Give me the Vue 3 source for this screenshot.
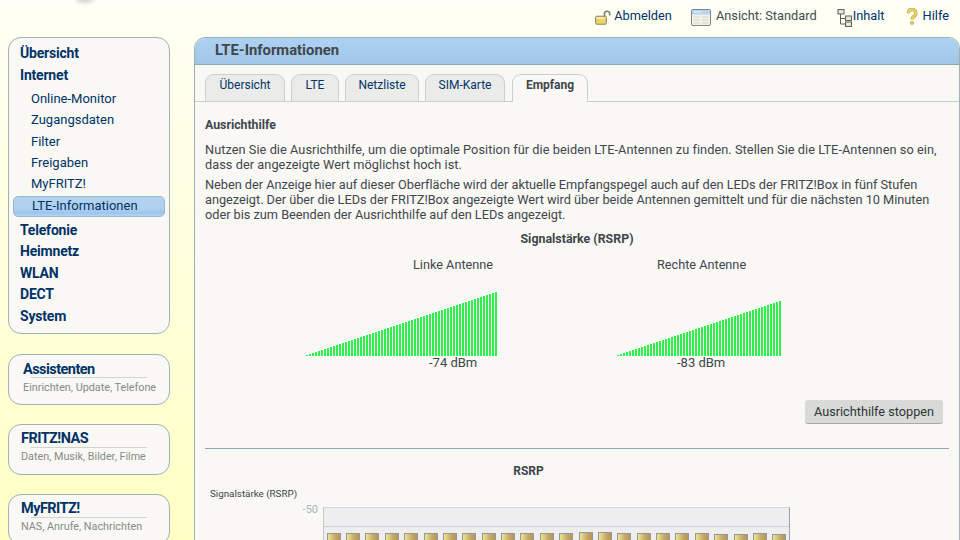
<script setup>
const nav1 = ['Online-Monitor', 'Zugangsdaten', 'Filter', 'Freigaben', 'MyFRITZ!']
const nav2 = ['Telefonie', 'Heimnetz', 'WLAN', 'DECT', 'System']
const tabs = [
  { label: 'Übersicht', width: 80 },
  { label: 'LTE', width: 48 },
  { label: 'Netzliste', width: 74 },
  { label: 'SIM-Karte', width: 80 }
]
const leftBars = Array.from({ length: 64 }, (_, i) => i + 1)
const rightBars = Array.from({ length: 55 }, (_, i) => i + 1)
const tops = [1, 1, 1, 1, 1, 1, 1, 1, 1, 1, 1, 1, 1, 0, 0, 1, 1, 1, 1, 1, 2, 2, 1, 2]
</script>

<template>
  <div class="page">
    <div class="logo-smudge"></div>
    <header class="topbar">
      <a class="toplink logout">
        <svg width="17" height="15" viewBox="0 0 17 15"><path d="M9.500 7V3.800a2.600 2.600 0 0 1 5.200 0V5.500" fill="none" stroke="#7d7d78" stroke-width="1.600"/><rect x="0.700" y="6.200" width="10.600" height="8" rx="1" fill="#ecd566" stroke="#86805a"/><rect x="1.500" y="7" width="9" height="2" fill="#f7eaa0"/></svg>
        <span>Abmelden</span>
      </a>
      <a class="toplink view">
        <svg width="20" height="17" viewBox="0 0 20 17"><rect x="0.500" y="0.500" width="19" height="16" rx="1.500" fill="#f3f1e6" stroke="#7f8486"/><rect x="1" y="1" width="18" height="4.500" fill="#b5d5f2"/><path d="M3 3h8" stroke="#e8f2fb"/><path d="M3 8h6M11 8h6M3 11h6M11 11h6M3 14h6M11 14h6" stroke="#d4d6ce"/></svg>
        <span class="grey">Ansicht: Standard</span>
      </a>
      <a class="toplink content">
        <svg width="15" height="18" viewBox="0 0 15 18"><path d="M3.500 4.500V15H8M3.500 9.500H8" fill="none" stroke="#5e5e5a"/><rect x="1" y="0.500" width="6" height="4.500" fill="#e6e5da" stroke="#5e5e5a"/><rect x="8.500" y="7" width="6" height="4.500" fill="#e6e5da" stroke="#5e5e5a"/><rect x="8.500" y="13" width="6" height="4.500" fill="#e6e5da" stroke="#5e5e5a"/></svg>
        <span>Inhalt</span>
      </a>
      <a class="toplink help">
        <svg width="12" height="17" viewBox="0 0 12 17"><path d="M2.300 5.200a3.800 3.800 0 1 1 6 3C7 9.200 6 9.800 6 11.500" fill="none" stroke="#a89a58" stroke-width="3.400"/><circle cx="6" cy="14.800" r="1.900" fill="#a89a58"/><path d="M2.300 5.200a3.800 3.800 0 1 1 6 3C7 9.200 6 9.800 6 11.500" fill="none" stroke="#efd75a" stroke-width="2.200"/><circle cx="6" cy="14.800" r="1.200" fill="#efd75a"/></svg>
        <span>Hilfe</span>
      </a>
    </header>

    <div class="columns">
      <aside class="sidebar">
        <nav class="box navbox">
          <a class="nav-main top">Übersicht</a>
          <a class="nav-main top">Internet</a>
          <ul class="subnav">
            <li v-for="n in nav1" :key="n">{{ n }}</li>
            <li class="active">LTE-Informationen</li>
          </ul>
          <a v-for="n in nav2" :key="n" class="nav-main">{{ n }}</a>
        </nav>
        <section class="box promo first">
          <h3>Assistenten</h3>
          <p>Einrichten, Update, Telefone</p>
        </section>
        <section class="box promo">
          <h3>FRITZ!NAS</h3>
          <p>Daten, Musik, Bilder, Filme</p>
        </section>
        <section class="box promo">
          <h3>MyFRITZ!</h3>
          <p>NAS, Anrufe, Nachrichten</p>
        </section>
      </aside>

      <main class="panel">
        <h1 class="panel-head">LTE-Informationen</h1>
        <div class="tabs">
          <span v-for="t in tabs" :key="t.label" class="tab" :style="{ width: t.width + 'px' }">{{ t.label }}</span>
          <span class="tab current">Empfang</span>
        </div>
        <div class="body">
          <h2 class="section">Ausrichthilfe</h2>
          <p class="para first">Nutzen Sie die Ausrichthilfe, um die optimale Position für die beiden LTE-Antennen zu finden. Stellen Sie die LTE-Antennen so ein, dass der angezeigte Wert möglichst hoch ist.</p>
          <p class="para second">Neben der Anzeige hier auf dieser Oberfläche wird der aktuelle Empfangspegel auch auf den LEDs der FRITZ!Box in fünf Stufen angezeigt. Der über die LEDs der FRITZ!Box angezeigte Wert wird über beide Antennen gemittelt und für die nächsten 10 Minuten oder bis zum Beenden der Ausrichthilfe auf den LEDs angezeigt.</p>
          <div class="sig-title">Signalstärke (RSRP)</div>
          <div class="meters">
            <div class="meter left">
              <div class="ant ant-l">Linke Antenne</div>
              <div class="bars"><i v-for="h in leftBars" :key="h" :style="{ height: h + 'px' }"></i></div>
              <div class="dbm dbm-l">-74 dBm</div>
            </div>
            <div class="meter right">
              <div class="ant ant-r">Rechte Antenne</div>
              <div class="bars"><i v-for="h in rightBars" :key="h" :style="{ height: h + 'px' }"></i></div>
              <div class="dbm dbm-r">-83 dBm</div>
            </div>
          </div>
          <div class="actions"><button class="btn">Ausrichthilfe stoppen</button></div>
          <hr class="rule" />
          <div class="rsrp-title">RSRP</div>
          <div class="chart-label">Signalstärke (RSRP)</div>
          <div class="chart">
            <span class="tick">-50</span>
            <div class="plot">
              <div class="grid"></div>
              <div class="cols">
                <b v-for="(t, i) in tops" :key="i" :style="{ marginTop: t + 'px' }"></b>
              </div>
            </div>
          </div>
        </div>
      </main>
    </div>
  </div>
</template>

<style>
html, body { margin: 0; height: 100%; overflow: hidden; }
</style>

<style scoped>
.page {
  position: relative;
  width: 960px;
  height: 540px;
  overflow: hidden;
  font-family: Roboto, sans-serif;
  font-size: 13px;
  color: #3f464c;
  background: linear-gradient(#fffff6 0, #ffffe6 150px, #ffffc4 540px);
}
.logo-smudge {
  position: absolute;
  left: 76px;
  top: -6px;
  width: 18px;
  height: 9px;
  border-radius: 50%;
  background: #d4d4cc;
  filter: blur(2px);
}
.topbar {
  height: 37px;
  display: flex;
  justify-content: flex-end;
  align-items: flex-start;
  box-sizing: border-box;
  padding: 7px 11px 0 0;
  color: #003366;
  font-size: 12.8px;
}
.toplink { display: flex; align-items: center; height: 18px; }
.toplink span { line-height: 18px; }
.toplink svg { flex: none; }
.logout svg { margin-right: 2px; margin-top: 3px; }
.view { margin-left: 19px; }
.view svg { margin-right: 5px; margin-top: 3px; }
.content { margin-left: 20px; }
.content svg { margin-right: 1px; margin-top: 4px; }
.help { margin-left: 21px; }
.help svg { margin-right: 5px; }
.grey { color: #3f4a52; }
.columns { display: flex; align-items: flex-start; padding-left: 8px; }
.sidebar { width: 162px; flex: none; }
.box {
  box-sizing: border-box;
  border: 1px solid #9db2b5;
  border-radius: 13px;
  background: #f9f8f4;
}
.navbox { height: 297px; padding: 3.500px 4px 0; display: flex; flex-direction: column; }
.nav-main {
  display: block;
  padding-left: 7px;
  font-size: 14px;
  font-weight: 700;
  letter-spacing: -0.2px;
  line-height: 21.500px;
  color: #003366;
}
.nav-main.top { line-height: 22px; }
.subnav { list-style: none; margin: 2.500px 0 2.500px; padding: 0; }
.subnav li {
  height: 21.250px;
  padding-left: 18px;
  line-height: 21px;
  font-size: 13px;
  color: #003366;
}
.subnav li.active {
  box-sizing: border-box;
  width: 152px;
  height: 21px;
  margin-top: 2px;
  padding-left: 18px;
  border: 1px solid #9bb8cc;
  border-radius: 5px;
  line-height: 18px;
  background: linear-gradient(#b3d2ee 0, #b0d0ee 60%, #9cc5ee 85%, #b6d4ee 100%);
}
.promo { height: 51px; margin-top: 19px; }
.promo.first { margin-top: 20px; }
.promo h3 {
  position: relative;
  margin: 0 0 0 12px;
  height: 22px;
  font-size: 14.500px;
  font-weight: 700;
  letter-spacing: -0.550px;
  line-height: 27px;
  color: #003366;
}
.promo h3::after {
  content: '';
  position: absolute;
  left: 10px;
  top: 22px;
  width: 116px;
  height: 1px;
  background: #d0d4cf;
}
.promo.first h3 { margin-left: 14px; line-height: 29px; }
.promo.first h3::after { left: 8px; }
.promo.first p { margin: 4px 0 0 14px; }
.promo p { margin: 3px 0 0 12px; font-size: 10.800px; line-height: 14px; color: #868a88; white-space: nowrap; }
.panel {
  flex: none;
  box-sizing: border-box;
  width: 766px;
  margin-left: 24px;
  height: 600px;
  border: 1px solid #9db2b5;
  border-radius: 11px 11px 0 0;
  background: #f9f8f4;
}
.panel-head {
  margin: 0;
  height: 26px;
  padding-left: 20px;
  font-size: 14.800px;
  font-weight: 700;
  line-height: 24px;
  color: #3f464c;
  border-bottom: 1px solid #8fa8ae;
  border-radius: 10px 10px 0 0;
  background: linear-gradient(#aed2f3, #a2c6e6);
}
.tabs {
  display: flex;
  gap: 6px;
  height: 27px;
  margin-top: 9px;
  padding-left: 10px;
  border-bottom: 1px solid #c8cfcc;
}
.tab {
  box-sizing: border-box;
  height: 27px;
  border: 1px solid #c9d0cf;
  border-bottom: 0;
  border-radius: 9px 9px 0 0;
  background: #ebebea;
  font-size: 12px;
  line-height: 21px;
  text-align: center;
  color: #003366;
}
.tab.current {
  width: 76px;
  height: 28px;
  margin-left: 1px;
  background: #f9f8f4;
  font-weight: 700;
  color: #3f464c;
}
.body { padding: 0 10px; }
.section { margin: 16px 0 0; font-size: 12.300px; font-weight: 700; line-height: 15px; color: #3f464c; }
.para { margin: 5px 0 0; font-size: 12.750px; line-height: 15px; color: #3f464c; }
.para.first { margin-top: 9px; letter-spacing: 0.050px; }
.para.second { letter-spacing: -0.020px; }
.sig-title { margin-top: 9px; text-align: center; font-size: 12.400px; font-weight: 700; line-height: 16px; }
.meters { position: relative; height: 144px; }
.meter { position: absolute; top: 0; }
.meter.left { left: 100px; width: 192px; }
.meter.right { left: 411px; width: 165px; }
.ant { position: absolute; top: 10px; white-space: nowrap; font-size: 12.700px; line-height: 16px; }
.ant-l { left: 108px; }
.ant-r { left: 41px; }
.bars { position: absolute; top: 45px; left: 1px; height: 64px; display: flex; align-items: flex-end; gap: 1px; }
.right .bars { top: 54px; height: 55px; }
.bars i { display: block; width: 2px; background: #2ff04a; }
.dbm { position: absolute; top: 108px; white-space: nowrap; font-size: 13px; line-height: 16px; }
.dbm-l { left: 124px; }
.dbm-r { left: 61px; }
.actions { display: flex; justify-content: flex-end; margin-top: 9px; padding-right: 6px; }
.btn {
  width: 138px;
  height: 24px;
  padding: 0;
  border: 0;
  border-bottom: 1px solid #a8a8a6;
  border-radius: 3px;
  background: #d9d9d7;
  font-family: Roboto, sans-serif;
  font-size: 12.700px;
  color: #303538;
}
.rule { margin: 24px 0 0; border: 0; border-top: 1px solid #8fa8ae; }
.rsrp-title { margin-top: 14px; text-align: center; font-size: 12px; font-weight: 700; line-height: 16px; padding-right: 97px; }
.chart-label { margin-top: 8px; margin-left: 5px; font-size: 9.800px; line-height: 14px; }
.chart { display: flex; margin-top: 6px; }
.tick { width: 113px; flex: none; margin-top: -3px; text-align: right; font-size: 11px; line-height: 12px; color: #a8b2c0; }
.plot {
  position: relative;
  width: 465px;
  height: 60px;
  margin-left: 5px;
  border-top: 1px solid #d4d8dc;
  border-left: 1px solid #c0c8d2;
  border-right: 1px solid #98a4b0;
  background: #eeeeee;
}
.grid { height: 18px; border-bottom: 1px solid #cdd3d9; }
.cols { position: absolute; top: 24px; left: 0; right: 0; display: flex; justify-content: space-around; }
.cols b {
  display: block;
  width: 14px;
  height: 30px;
  border: 1px solid #94989c;
  box-sizing: border-box;
  background: linear-gradient(90deg, #ece68c, #c4a868 60%, #b8955a);
}
</style>
